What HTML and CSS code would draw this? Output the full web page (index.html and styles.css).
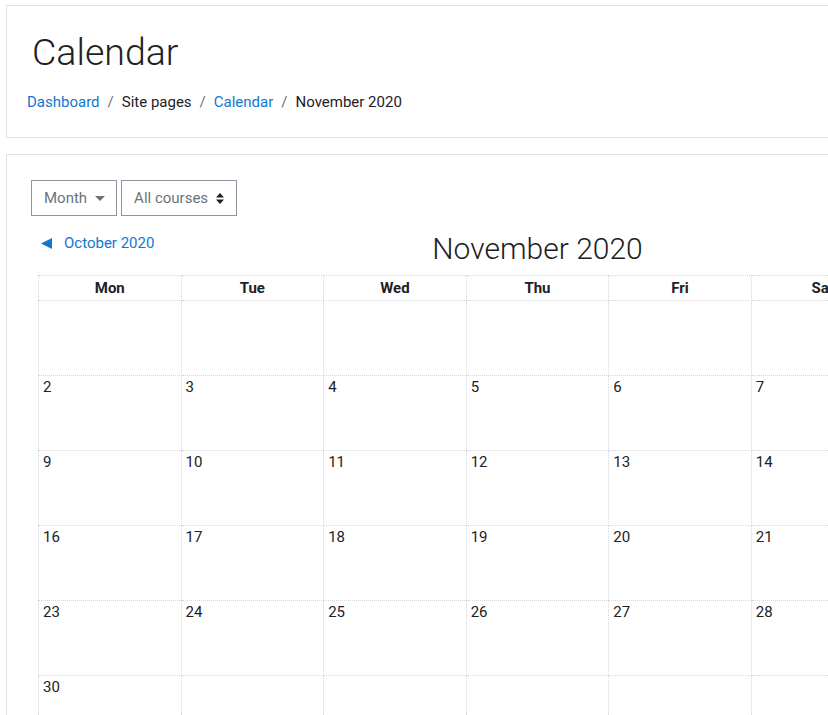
FILE: index.html
```html
<!DOCTYPE html>
<html lang="en">
<head>
    <meta charset="UTF-8">
    <meta name="viewport" content="width=device-width, initial-scale=1.0">
    <title>Calendar</title>
    <link rel="stylesheet" href="styles.css">
</head>
<body>
    <div class="page">
        <header class="card page-header">
            <h1>Calendar</h1>
            <nav class="breadcrumb">
                <a href="#">Dashboard</a>
                <span class="sep">/</span>
                <span>Site pages</span>
                <span class="sep">/</span>
                <a href="#">Calendar</a>
                <span class="sep">/</span>
                <span>November 2020</span>
            </nav>
        </header>

        <section class="card calendar-card">
            <div class="controls">
                <button class="btn-view" type="button">Month
                    <svg class="caret" width="10" height="5" viewBox="0 0 10 5"><path d="M0 0h10L5 5z" fill="#6a737b"/></svg>
                </button>
                <div class="course-select">All courses
                    <svg class="updown" width="8" height="11" viewBox="0 0 8 11"><path d="M4 0l4 4.5H0z M4 11L0 6.5h8z" fill="#1d2125"/></svg>
                </div>
            </div>

            <div class="calendar">
                <div class="month-nav">
                    <a class="prev" href="#">
                        <svg width="11" height="11" viewBox="0 0 11 11"><path d="M0 5.5L11 0v11z" fill="#1177d1"/></svg>
                        <span>October 2020</span>
                    </a>
                    <h2>November 2020</h2>
                </div>

                <table class="month">
                    <thead>
                        <tr>
                            <th>Mon</th><th>Tue</th><th>Wed</th><th>Thu</th><th>Fri</th><th>Sat</th><th>Sun</th>
                        </tr>
                    </thead>
                    <tbody>
                        <tr><td></td><td></td><td></td><td></td><td></td><td></td><td>1</td></tr>
                        <tr><td>2</td><td>3</td><td>4</td><td>5</td><td>6</td><td>7</td><td>8</td></tr>
                        <tr><td>9</td><td>10</td><td>11</td><td>12</td><td>13</td><td>14</td><td>15</td></tr>
                        <tr><td>16</td><td>17</td><td>18</td><td>19</td><td>20</td><td>21</td><td>22</td></tr>
                        <tr><td>23</td><td>24</td><td>25</td><td>26</td><td>27</td><td>28</td><td>29</td></tr>
                        <tr><td>30</td><td></td><td></td><td></td><td></td><td></td><td></td></tr>
                    </tbody>
                </table>
            </div>
        </section>
    </div>
</body>
</html>
```

FILE: styles.css
```css
html, body {
    overflow: hidden;
}
body {
    margin: 0;
    background-color: #fff;
    color: #1d2125;
    font-family: Roboto, "Liberation Sans", sans-serif;
    font-size: 15px;
    line-height: 1.5;
}
a {
    color: #1177d1;
    text-decoration: none;
}
.page {
    width: 1100px;
    padding: 5px 6px;
}
.card {
    border: 1px solid #dee2e6;
    background-color: #fff;
}
.page-header {
    height: 131px;
    padding: 0 20px;
    margin-bottom: 16px;
}
h1 {
    margin: 24px 0 0 5px;
    font-size: 37.5px;
    font-weight: 300;
    line-height: 1.2;
}
.breadcrumb {
    display: flex;
    margin-top: 16px;
}
.breadcrumb .sep {
    color: #6a737b;
    padding: 0 8px;
}
.calendar-card {
    padding: 25px 24px;
}
.controls {
    display: flex;
    gap: 4px;
}
.btn-view, .course-select {
    display: flex;
    align-items: center;
    height: 36px;
    box-sizing: border-box;
    border: 1px solid #8f959e;
    background-color: #fff;
    color: #6a737b;
    font-family: inherit;
    font-size: 15px;
    padding: 0 12px;
}
.btn-view {
    padding: 0 11px 0 12px;
}
.btn-view .caret {
    margin-left: 8px;
}
.course-select .updown {
    margin-left: 8px;
}
.calendar {
    margin-left: 7px;
    width: 999px;
}
.month-nav {
    position: relative;
    height: 59px;
    display: flex;
    justify-content: center;
}
.prev {
    position: absolute;
    left: 3px;
    top: 16px;
    display: flex;
    align-items: center;
    gap: 12px;
}
h2 {
    margin: 15px 0 0;
    font-size: 30px;
    font-weight: 300;
    line-height: 1.2;
}
table.month {
    width: 999px;
    table-layout: fixed;
    border-collapse: collapse;
}
.month th, .month td {
    border: 1px dotted #d3d7db;
}
.month th {
    height: 24px;
    padding: 0;
    font-weight: 700;
    text-align: center;
    line-height: 24px;
}
.month td {
    height: 74px;
    padding: 0 4px;
    vertical-align: top;
}
```
